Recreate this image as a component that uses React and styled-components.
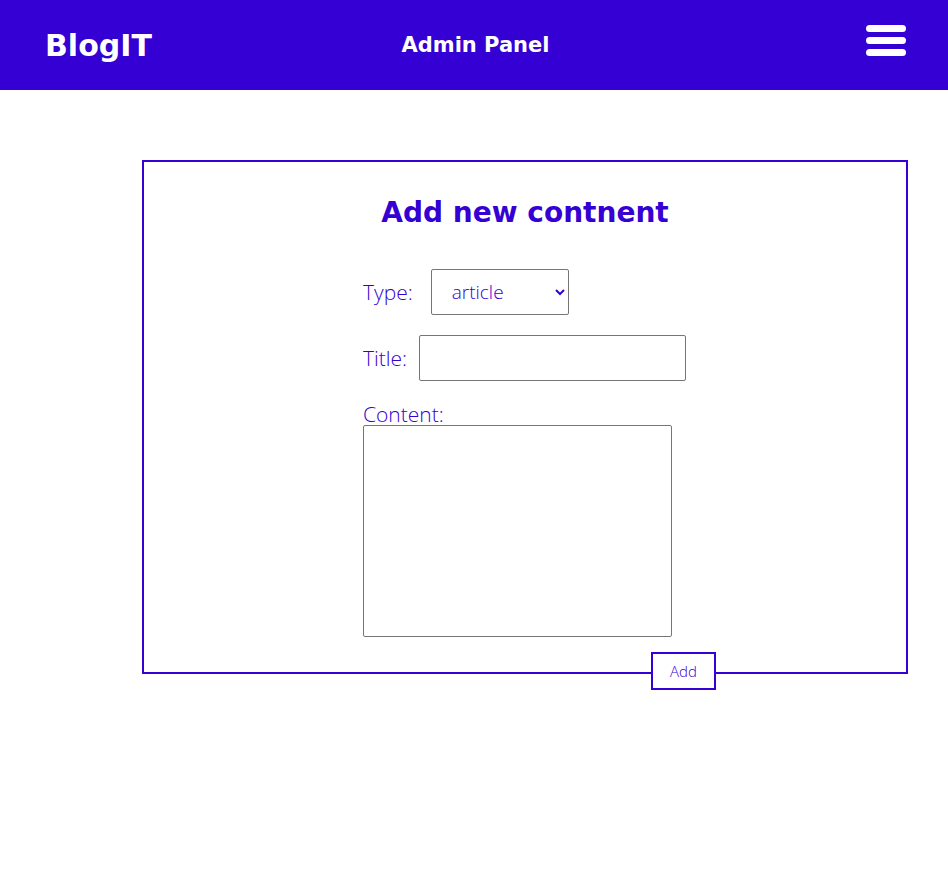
import React from 'react'
import styled, { createGlobalStyle } from 'styled-components';

const Global = createGlobalStyle`
  body {
    margin: 0;
    font-family: "DejaVu Sans", "Open Sans", sans-serif;
    background: #fff;
  }
`

const App = () => {
  return (
    <>
      <Global />
      <Header>
        <Logo>BlogIT</Logo>
        <PageName>Admin Panel</PageName>
        <Burger aria-label="menu">
          <span /><span /><span />
        </Burger>
      </Header>

      <Main>
        <Card>
          <Heading>Add new contnent</Heading>
          <Form onSubmit={e => e.preventDefault()}>
            <Row>
              <Label htmlFor="type" gap={18}>Type:</Label>
              <Select id="type" defaultValue="article">
                <option value="article">article</option>
                <option value="news">news</option>
              </Select>
            </Row>
            <Row>
              <Label htmlFor="title" gap={12}>Title:</Label>
              <TitleInput id="title" type="text" />
            </Row>
            <Column>
              <Label htmlFor="content">Content:</Label>
              <TextArea id="content" />
            </Column>
            <AddButton type="submit">Add</AddButton>
          </Form>
        </Card>
      </Main>
    </>
  )
}

const blue = '#3500d3'
const light = '"Open Sans", "DejaVu Sans", sans-serif'

const Header = styled.header`
  display: grid;
  grid-template-columns: 1fr auto 1fr;
  align-items: center;
  height: 90px;
  padding: 0 42px 0 45px;
  background: ${blue};
  color: #fff;
`

const Logo = styled.h1`
  margin: 0;
  font-size: 30px;
  font-weight: 700;
`

const PageName = styled.h2`
  margin: 0;
  font-size: 21px;
  font-weight: 700;
`

const Burger = styled.button`
  justify-self: end;
  display: flex;
  flex-direction: column;
  gap: 5px;
  width: 40px;
  padding: 0;
  margin-top: -10px;
  border: none;
  background: none;
  cursor: pointer;

  span {
    display: block;
    height: 7px;
    border-radius: 4px;
    background: #fff;
  }
`

const Main = styled.main`
  padding: 70px 0 200px;
`

const Card = styled.section`
  box-sizing: border-box;
  width: 766px;
  height: 514px;
  margin-left: 142px;
  border: 2px solid ${blue};
`

const Heading = styled.h3`
  margin: 34px 0 40px;
  text-align: center;
  color: ${blue};
  font-size: 28px;
  font-weight: 600;
`

const Form = styled.form`
  width: 324px;
  margin: 0 auto;
  display: flex;
  flex-direction: column;
  gap: 20px;
`

const Row = styled.div`
  display: flex;
  align-items: center;
`

const Column = styled.div`
  display: flex;
  flex-direction: column;
  align-items: flex-start;
  margin-top: 2px;
`

const Label = styled.label`
  color: ${blue};
  font-family: ${light};
  font-size: 21px;
  font-weight: 300;
  line-height: 22px;
  margin-right: ${p => p.gap || 0}px;
`

const Select = styled.select`
  box-sizing: border-box;
  width: 138px;
  height: 46px;
  padding: 0 12px 0 16px;
  color: ${blue};
  font-family: ${light};
  font-size: 19px;
  font-weight: 300;
  border: 1px solid #767676;
  border-radius: 2px;
  background: #fff;
`

const TitleInput = styled.input`
  box-sizing: border-box;
  width: 267px;
  height: 46px;
  border: 1px solid #767676;
  border-radius: 2px;
`

const TextArea = styled.textarea`
  box-sizing: border-box;
  width: 309px;
  height: 212px;
  resize: none;
  border: 1px solid #767676;
  border-radius: 2px;
`

const AddButton = styled.button`
  align-self: flex-start;
  box-sizing: border-box;
  width: 65px;
  height: 38px;
  margin: -5px 0 0 288px;
  border: 2px solid ${blue};
  background: #fff;
  color: ${blue};
  font-family: ${light};
  font-size: 15px;
  font-weight: 300;
  cursor: pointer;
`

export default App
